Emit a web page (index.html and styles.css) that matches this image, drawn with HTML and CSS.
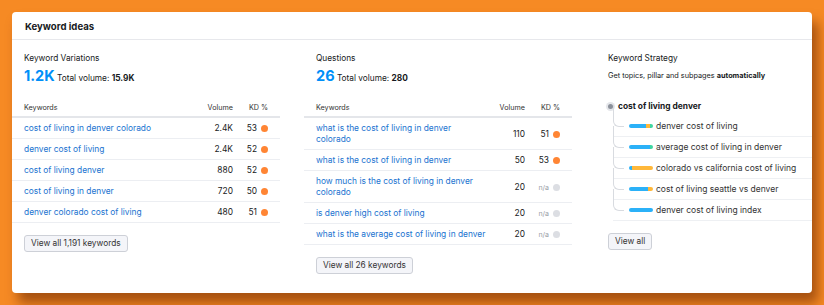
FILE: index.html
```html
<html><head>
<meta charset="utf-8">
<link rel="stylesheet" href="styles.css">
</head>
<body>

<div class="card">
    <div class="card-head">Keyword ideas</div>
    <div class="card-body">

        <section class="col">
            <div class="col-title">Keyword Variations</div>
            <div class="stat"><span class="stat-num">1.2K</span> Total volume: <b>15.9K</b></div>
            <div class="kw-table">
                <div class="kw-row kw-head"><span>Keywords</span><span class="num">Volume</span><span class="num">KD %</span></div>
                <div class="kw-row"><a href="#">cost of living in denver colorado</a><span class="num">2.4K</span><span class="kd">53<i class="dot"></i></span></div>
                <div class="kw-row"><a href="#">denver cost of living</a><span class="num">2.4K</span><span class="kd">52<i class="dot"></i></span></div>
                <div class="kw-row"><a href="#">cost of living denver</a><span class="num">880</span><span class="kd">52<i class="dot"></i></span></div>
                <div class="kw-row"><a href="#">cost of living in denver</a><span class="num">720</span><span class="kd">50<i class="dot"></i></span></div>
                <div class="kw-row"><a href="#">denver colorado cost of living</a><span class="num">480</span><span class="kd">51<i class="dot"></i></span></div>
            </div>
            <button class="view-btn">View all 1,191 keywords</button>
        </section>

        <section class="col">
            <div class="col-title">Questions</div>
            <div class="stat"><span class="stat-num">26</span> Total volume: <b>280</b></div>
            <div class="kw-table">
                <div class="kw-row kw-head"><span>Keywords</span><span class="num">Volume</span><span class="num">KD %</span></div>
                <div class="kw-row"><a href="#">what is the cost of living in denver<br>colorado</a><span class="num">110</span><span class="kd">51<i class="dot"></i></span></div>
                <div class="kw-row"><a href="#">what is the cost of living in denver</a><span class="num">50</span><span class="kd">53<i class="dot"></i></span></div>
                <div class="kw-row"><a href="#">how much is the cost of living in denver colorado</a><span class="num">20</span><span class="kd na">n/a<i class="dot"></i></span></div>
                <div class="kw-row"><a href="#">is denver high cost of living</a><span class="num">20</span><span class="kd na">n/a<i class="dot"></i></span></div>
                <div class="kw-row"><a href="#">what is the average cost of living in denver</a><span class="num">20</span><span class="kd na">n/a<i class="dot"></i></span></div>
            </div>
            <button class="view-btn">View all 26 keywords</button>
        </section>

        <section class="col strategy">
            <div class="col-title">Keyword Strategy</div>
            <div class="strategy-note">Get topics, pillar and subpages <b>automatically</b></div>
            <div class="tree">
                <div class="tree-root"><i class="root-dot"></i>cost of living denver</div>
                <ul class="tree-children">
                    <li class="branch"><span class="bar"><i class="seg blue" style="flex:16"></i><i class="seg yellow" style="flex:4"></i><i class="seg green" style="flex:3"></i></span>denver cost of living</li>
                    <li class="branch"><span class="bar"><i class="seg blue" style="flex:21"></i><i class="seg green" style="flex:3"></i></span>average cost of living in denver</li>
                    <li class="branch"><span class="bar"><i class="seg blue" style="flex:3"></i><i class="seg yellow" style="flex:21"></i></span>colorado vs california cost of living</li>
                    <li class="branch"><span class="bar"><i class="seg blue" style="flex:19"></i><i class="seg yellow" style="flex:5"></i></span>cost of living seattle vs denver</li>
                    <li class="branch"><span class="bar"><i class="seg blue" style="flex:24"></i></span>denver cost of living index</li>
                </ul>
            </div>
            <button class="view-btn">View all</button>
        </section>

    </div>
</div>

</body>
</html>
```

FILE: styles.css
```css
* {
    box-sizing: border-box;
}

body {
    margin: 0;
    padding: 12px;
    background-color: #f68a24;
    font-family: Inter, "Noto Sans", sans-serif;
    color: #171a22;
}

.card {
    width: 800px;
    height: 281px;
    background-color: white;
    border-radius: 4px;
    box-shadow: 6px 10px 12px rgba(100, 35, 0, 0.55);
}

.card-head {
    padding: 8px 13px 5px;
    font-size: 9.6px;
    font-weight: 700;
    line-height: 14px;
    border-bottom: 1px solid #e7e8ec;
}

.card-body {
    display: grid;
    grid-template-columns: 268px 268px 1fr;
    column-gap: 24px;
}

.col-title {
    margin: 11px 0 0 12px;
    font-size: 8.3px;
    line-height: 14px;
}

.stat {
    margin: 1px 0 0 12px;
    font-size: 8.3px;
    line-height: 20px;
}

.stat b {
    font-weight: 700;
}

.stat-num {
    color: #008ff8;
    font-size: 14.5px;
    font-weight: 700;
}

.kw-table {
    margin-top: 10px;
}

.kw-row {
    display: grid;
    grid-template-columns: 1fr 26px 35px;
    align-items: center;
    padding: 5px 12px 4px;
    border-bottom: 1px solid #eceef2;
    font-size: 8.4px;
    line-height: 11px;
}

.kw-head {
    height: 20px;
    padding-top: 4px;
    padding-bottom: 3px;
    border-bottom: 2px solid #e4e6ea;
    font-size: 7.2px;
    color: #333;
}

.kw-row a {
    color: #1a73d0;
    text-decoration: none;
}

.num {
    text-align: right;
}

.kd {
    display: flex;
    justify-content: flex-end;
    align-items: center;
    gap: 4px;
}

.dot {
    width: 7px;
    height: 7px;
    border-radius: 50%;
    background-color: #ff8534;
}

.kd.na {
    font-size: 7px;
    color: #9a9ea6;
}

.kd.na .dot {
    background-color: #dcdee3;
}

.view-btn {
    display: block;
    margin: 12px 0 0 12px;
    padding: 2px 6px;
    font-family: Inter, "Noto Sans", sans-serif;
    font-size: 8.3px;
    line-height: 11px;
    color: #333;
    background-color: #f4f5f9;
    border: 1px solid #cdd0d7;
    border-radius: 3px;
}

.strategy {
    padding-left: 12px;
}

.strategy .col-title,
.strategy .view-btn {
    margin-left: 0;
}

.strategy-note {
    margin-top: 1px;
    font-size: 7.3px;
    line-height: 20px;
}

.strategy-note b {
    font-weight: 700;
}

.tree {
    margin-top: 10px;
}

.tree-root {
    display: flex;
    align-items: center;
    gap: 5px;
    height: 20px;
    font-size: 8.4px;
    font-weight: 700;
}

.root-dot {
    width: 5px;
    height: 5px;
    border-radius: 50%;
    background-color: #8b909a;
    box-shadow: 0 0 0 2px #e4e6ea;
}

.tree-children {
    list-style: none;
    margin: 0 0 0 5px;
    padding: 0;
}

.branch {
    position: relative;
    display: flex;
    align-items: center;
    gap: 3px;
    height: 21px;
    padding-left: 16px;
    border-bottom: 1px solid #eef0f3;
    font-size: 8.5px;
    color: #333;
}

.branch::before {
    content: "";
    position: absolute;
    left: 0;
    top: -11px;
    width: 10px;
    height: 21px;
    border-left: 1px solid #d8dbe0;
    border-bottom: 1px solid #d8dbe0;
    border-bottom-left-radius: 6px;
}

.bar {
    display: flex;
    width: 24px;
    height: 4px;
    border-radius: 2px;
    overflow: hidden;
}

.seg {
    height: 100%;
}

.blue {
    background-color: #2bb1f8;
}

.yellow {
    background-color: #ffb83a;
}

.green {
    background-color: #3fd6a0;
}
```
